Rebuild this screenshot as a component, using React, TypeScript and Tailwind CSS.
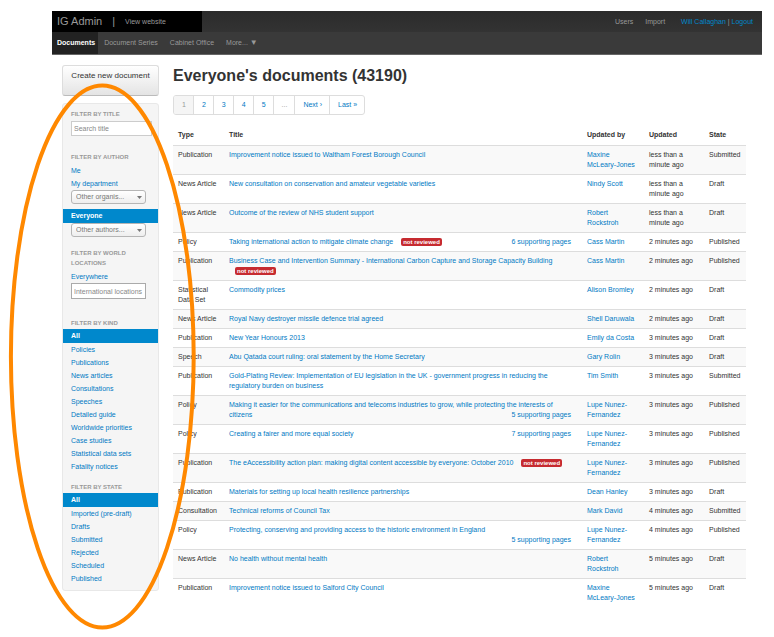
import React from "react";

type Doc = {
  type: string;
  title: string;
  author: string;
  updated: string;
  state: string;
  notReviewed?: boolean;
  supporting?: string;
};

const docs: Doc[] = [
  { type: "Publication", title: "Improvement notice issued to Waltham Forest Borough Council", author: "Maxine McLeary-Jones", updated: "less than a minute ago", state: "Submitted" },
  { type: "News Article", title: "New consultation on conservation and amateur vegetable varieties", author: "Nindy Scott", updated: "less than a minute ago", state: "Draft" },
  { type: "News Article", title: "Outcome of the review of NHS student support", author: "Robert Rockstroh", updated: "less than a minute ago", state: "Draft" },
  { type: "Policy", title: "Taking international action to mitigate climate change", author: "Cass Martin", updated: "2 minutes ago", state: "Published", notReviewed: true, supporting: "6 supporting pages" },
  { type: "Publication", title: "Business Case and Intervention Summary - International Carbon Capture and Storage Capacity Building", author: "Cass Martin", updated: "2 minutes ago", state: "Published", notReviewed: true },
  { type: "Statistical Data Set", title: "Commodity prices", author: "Alison Bromley", updated: "2 minutes ago", state: "Draft" },
  { type: "News Article", title: "Royal Navy destroyer missile defence trial agreed", author: "Shell Daruwala", updated: "2 minutes ago", state: "Draft" },
  { type: "Publication", title: "New Year Honours 2013", author: "Emily da Costa", updated: "3 minutes ago", state: "Draft" },
  { type: "Speech", title: "Abu Qatada court ruling: oral statement by the Home Secretary", author: "Gary Rolin", updated: "3 minutes ago", state: "Draft" },
  { type: "Publication", title: "Gold-Plating Review: Implementation of EU legislation in the UK - government progress in reducing the regulatory burden on business", author: "Tim Smith", updated: "3 minutes ago", state: "Submitted" },
  { type: "Policy", title: "Making it easier for the communications and telecoms industries to grow, while protecting the interests of citizens", author: "Lupe Nunez-Fernandez", updated: "3 minutes ago", state: "Published", supporting: "5 supporting pages" },
  { type: "Policy", title: "Creating a fairer and more equal society", author: "Lupe Nunez-Fernandez", updated: "3 minutes ago", state: "Published", supporting: "7 supporting pages" },
  { type: "Publication", title: "The eAccessibility action plan: making digital content accessible by everyone: October 2010", author: "Lupe Nunez-Fernandez", updated: "3 minutes ago", state: "Published", notReviewed: true },
  { type: "Publication", title: "Materials for setting up local health resilience partnerships", author: "Dean Hanley", updated: "3 minutes ago", state: "Draft" },
  { type: "Consultation", title: "Technical reforms of Council Tax", author: "Mark David", updated: "4 minutes ago", state: "Submitted" },
  { type: "Policy", title: "Protecting, conserving and providing access to the historic environment in England", author: "Lupe Nunez-Fernandez", updated: "4 minutes ago", state: "Published", supporting: "5 supporting pages" },
  { type: "News Article", title: "No health without mental health", author: "Robert Rockstroh", updated: "5 minutes ago", state: "Draft" },
  { type: "Publication", title: "Improvement notice issued to Salford City Council", author: "Maxine McLeary-Jones", updated: "5 minutes ago", state: "Draft" },
];

const kinds = ["All", "Policies", "Publications", "News articles", "Consultations", "Speeches", "Detailed guide", "Worldwide priorities", "Case studies", "Statistical data sets", "Fatality notices"];
const states = ["All", "Imported (pre-draft)", "Drafts", "Submitted", "Rejected", "Scheduled", "Published"];
const pages = ["1", "2", "3", "4", "5", "...", "Next ›", "Last »"];

function FilterHeading({ children }: { children: React.ReactNode }) {
  return <h2 className="px-2 text-[6px] leading-[10px] font-bold text-[#999] uppercase">{children}</h2>;
}

function FilterLink({ label, active }: { label: string; active?: boolean }) {
  return (
    <a
      href="#"
      className={
        active
          ? "block bg-[#0088cc] px-2 leading-[14px] font-bold text-white"
          : "block px-2 leading-[13px] text-[#0079c4]"
      }
    >
      {label}
    </a>
  );
}

function FilterList({ items }: { items: string[] }) {
  return (
    <ul className="mt-px">
      {items.map((item) => (
        <li key={item}>
          <FilterLink label={item} active={item === "All"} />
        </li>
      ))}
    </ul>
  );
}

function FilterSelect({ label, text }: { label: string; text: string }) {
  return (
    <div className="relative mx-2 w-[75px]">
      <select
        aria-label={label}
        className="block h-[14px] w-full appearance-none rounded-[3px] border border-[#b5b5b5] bg-linear-to-b from-white to-[#eee] pl-1 text-[7px] leading-[12px] text-[#777]"
      >
        <option>{text}</option>
      </select>
      <svg viewBox="0 0 5 3" className="pointer-events-none absolute top-[6px] right-1 h-[3px] w-[5px]" aria-hidden="true">
        <path d="M0 0h5L2.5 3z" fill="#777" />
      </svg>
    </div>
  );
}

function Header() {
  return (
    <header className="mr-3 ml-[52px] text-[#999]">
      <div className="flex h-[21px] items-center justify-between bg-linear-to-b from-[#2b2b2b] to-[#333]">
        <div className="flex h-full w-[150px] items-center bg-black pl-[5px]">
          <a href="#" className="text-[11px] leading-[13px]">IG Admin</a>
          <span className="ml-[10px] text-[11px] leading-[13px]">|</span>
          <a href="#" className="ml-[10px]">View website</a>
        </div>
        <div className="flex items-center pr-[9px]">
          <a href="#">Users</a>
          <a href="#" className="ml-3">Import</a>
          <span className="ml-4">
            <a href="#" className="text-[#0088cc]">Will Callaghan</a> | <a href="#" className="text-[#0088cc]">Logout</a>
          </span>
        </div>
      </div>
      <nav className="flex h-[23px] items-center border-b border-[#666] bg-[#3a3a3a]">
        <a href="#" className="flex h-full items-center bg-[#222] pr-[3px] pl-[5px] font-bold text-white">Documents</a>
        <a href="#" className="px-[6px]">Document Series</a>
        <a href="#" className="px-[6px]">Cabinet Office</a>
        <a href="#" className="px-[6px]">More... <span className="text-[8px]">▼</span></a>
      </nav>
    </header>
  );
}

function Sidebar() {
  return (
    <aside className="w-[97px] shrink-0">
      <button
        type="button"
        className="flex h-[31px] w-full justify-center rounded-[3px] border border-[#ddd] border-b-[#bbb] bg-linear-to-b from-white to-[#e4e4e4] pt-1 text-[8px] leading-3 whitespace-nowrap text-[#333]"
      >
        Create new document
      </button>
      <form className="mt-[7px] rounded-[3px] border border-[#e8e8e8] bg-[#f5f5f5] pt-[5px] pb-[5px]">
        <FilterHeading>
          <label htmlFor="title">Filter by title</label>
        </FilterHeading>
        <div className="mt-[2px] px-2 pr-[6px]">
          <input
            id="title"
            placeholder="Search title"
            className="block h-[15px] w-full border border-[#ccc] bg-white px-[2px] text-[7px] leading-[13px] placeholder:text-[#888]"
          />
        </div>
        <div className="mt-4">
          <FilterHeading>Filter by author</FilterHeading>
          <div className="mt-[2px]">
            <FilterLink label="Me" />
            <FilterLink label="My department" />
          </div>
          <FilterSelect label="Organisation" text="Other organis..." />
          <div className="mt-[5px]">
            <FilterLink label="Everyone" active />
          </div>
          <FilterSelect label="Author" text="Other authors..." />
        </div>
        <div className="mt-[11px]">
          <FilterHeading>
            <label htmlFor="locations">Filter by world locations</label>
          </FilterHeading>
          <div className="mt-[2px]">
            <FilterLink label="Everywhere" />
          </div>
          <input
            id="locations"
            placeholder="International locations"
            className="mx-2 block h-4 w-[75px] border border-[#aaa] bg-white px-[2px] text-[7px] leading-[14px] placeholder:text-[#888]"
          />
        </div>
        <div className="mt-[19px]">
          <FilterHeading>Filter by kind</FilterHeading>
          <FilterList items={kinds} />
        </div>
        <div className="mt-[9px]">
          <FilterHeading>Filter by state</FilterHeading>
          <FilterList items={states} />
        </div>
      </form>
    </aside>
  );
}

function Pagination() {
  return (
    <nav className="mt-[9px] flex" aria-label="Pages">
      <ul className="flex overflow-hidden rounded-[3px] border border-[#ddd]">
        {pages.map((page) => (
          <li key={page} className="border-r border-[#ddd] last:border-r-0">
            {page === "1" || page === "..." ? (
              <span className={page === "1" ? "block bg-[#f5f5f5] pr-[7px] pl-2 leading-[18px] text-[#999]" : "block pr-[7px] pl-2 leading-[18px] text-[#999]"}>
                {page}
              </span>
            ) : (
              <a href="#" className="block pr-[7px] pl-2 leading-[18px] text-[#0079c4]">{page}</a>
            )}
          </li>
        ))}
      </ul>
    </nav>
  );
}

function DocumentTable() {
  return (
    <table className="mt-[10px] w-full table-fixed border-collapse text-left align-top leading-[10px]">
      <colgroup>
        <col className="w-[51px]" />
        <col />
        <col className="w-[62px]" />
        <col className="w-[60px]" />
        <col className="w-[42px]" />
      </colgroup>
      <thead>
        <tr>
          <th className="px-[5px] py-[5px] font-bold">Type</th>
          <th className="px-[5px] py-[5px] font-bold">Title</th>
          <th className="px-[5px] py-[5px] font-bold">Updated by</th>
          <th className="px-[5px] py-[5px] font-bold">Updated</th>
          <th className="px-[5px] py-[5px] font-bold">State</th>
        </tr>
      </thead>
      <tbody>
        {docs.map((doc) => (
          <tr key={doc.title} className="border-t border-[#ddd] align-top odd:bg-[#f9f9f9]">
            <td className="px-[5px] py-1">{doc.type}</td>
            <td className="px-[5px] py-1">
              <a href="#" className="text-[#0079c4]">{doc.title}</a>
              {doc.notReviewed && (
                <>
                  {" "}
                  <span className="ml-[6px] inline-block rounded-[2px] bg-[#c62b30] px-[2px] text-[6px] leading-[8px] font-bold text-white">
                    not reviewed
                  </span>
                </>
              )}
              {doc.supporting && (
                <a href="#" className="float-right mr-[6px] ml-7 text-[#0079c4]">{doc.supporting}</a>
              )}
            </td>
            <td className="px-[5px] py-1">
              <a href="#" className="text-[#0079c4]">{doc.author}</a>
            </td>
            <td className="px-[5px] py-1">{doc.updated}</td>
            <td className="px-[5px] py-1">{doc.state}</td>
          </tr>
        ))}
      </tbody>
    </table>
  );
}

export default function App() {
  return (
    <div className="relative min-h-screen bg-white pt-[11px] pb-8 font-['Liberation_Sans',Arial,sans-serif] text-[7px] leading-[10px] text-[#333]">
      <Header />
      <div className="mt-[10px] mr-7 ml-[62px] flex items-start gap-[14px]">
        <Sidebar />
        <main className="min-w-0 flex-1">
          <h1 className="text-[16px] leading-[21px] font-bold">Everyone's documents (43190)</h1>
          <Pagination />
          <DocumentTable />
        </main>
      </div>
      <svg className="pointer-events-none absolute top-[82px] left-2 h-[550px] w-[190px]" viewBox="0 0 190 550" aria-hidden="true">
        <ellipse cx="94.3" cy="274.6" rx="91.4" ry="271" fill="none" stroke="#ff8800" strokeWidth="4" />
      </svg>
    </div>
  );
}
